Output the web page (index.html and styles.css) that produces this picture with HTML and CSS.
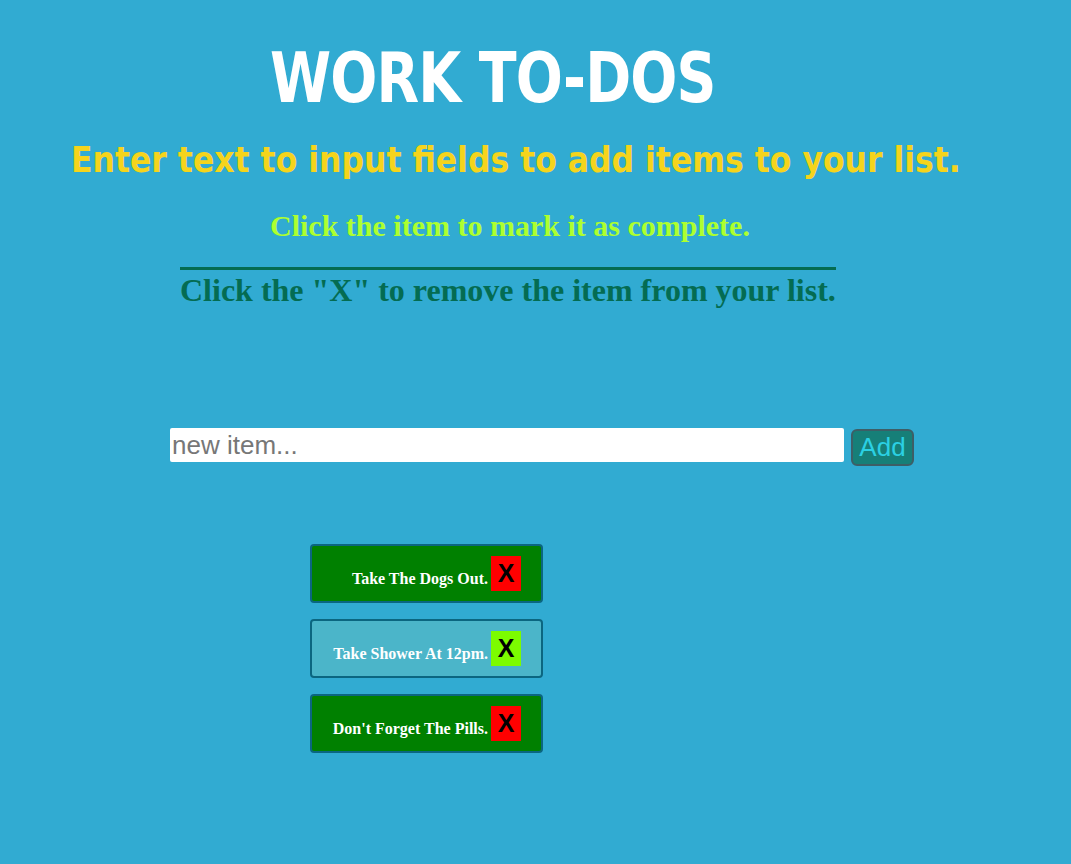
FILE: index.html
```html
<!DOCTYPE html>
<html>
<head>
<meta charset="utf-8">
<title>Work To-Dos</title>
<link rel="stylesheet" href="styles.css">
</head>
<body>
<div class="page">
  <h1 class="title">WORK TO-DOS</h1>
  <h2 class="intro">Enter text to input fields to add items to your list.</h2>
  <h3 class="hint-complete">Click the item to mark it as complete.</h3>
  <h3 class="hint-remove">Click the "X" to remove the item from your list.</h3>
  <div class="entry">
    <input class="entry-input" type="text" placeholder="new item...">
    <button class="entry-add">Add</button>
  </div>
  <ul class="todo-list">
    <li class="todo"><span class="todo-text">Take The Dogs Out.</span><span class="todo-x">X</span></li>
    <li class="todo done"><span class="todo-text">Take Shower At 12pm.</span><span class="todo-x">X</span></li>
    <li class="todo"><span class="todo-text">Don't Forget The Pills.</span><span class="todo-x">X</span></li>
  </ul>
</div>
</body>
</html>
```
FILE: styles.css
```css
html, body {
  margin: 0;
  padding: 0;
  background: #31abd2;
}
.page {
  display: flex;
  flex-direction: column;
  align-items: flex-start;
  min-height: 864px;
}
.title {
  margin: 36px 0 0 270px;
  font-family: "DejaVu Sans Condensed", "DejaVu Sans", sans-serif;
  font-weight: bold;
  font-size: 70px;
  line-height: 84px;
  color: #ffffff;
  transform: scaleX(0.88);
  transform-origin: left center;
  letter-spacing: -1px;
}
.intro {
  margin: 20px 0 0 71px;
  font-family: "DejaVu Sans Condensed", "DejaVu Sans", sans-serif;
  font-weight: bold;
  font-size: 35px;
  line-height: 40px;
  color: #f5d41c;
}
.hint-complete {
  margin: 29px 0 0 270px;
  font-family: "Liberation Serif", serif;
  font-weight: bold;
  font-size: 30px;
  line-height: 34px;
  color: #adff2f;
}
.hint-remove {
  margin: 24px 0 0 180px;
  padding-top: 3px;
  border-top: 3px solid #046c52;
  font-family: "Liberation Serif", serif;
  font-weight: bold;
  font-size: 32px;
  line-height: 34px;
  color: #046c52;
}
.entry {
  display: flex;
  align-items: flex-start;
  gap: 7px;
  margin: 121px 0 0 170px;
}
.entry-input {
  box-sizing: border-box;
  width: 674px;
  height: 34px;
  border: none;
  border-radius: 2px;
  padding: 0 2px;
  font-family: "Liberation Sans", sans-serif;
  font-size: 26px;
  color: #333;
  background: #fff;
  outline: none;
}
.entry-input::placeholder {
  color: #777;
}
.entry-add {
  box-sizing: border-box;
  width: 63px;
  height: 37px;
  margin-top: 1px;
  border: 2px solid #3d5e66;
  border-radius: 6px;
  background: #167f78;
  color: #2bd0e3;
  font-family: "Liberation Sans", sans-serif;
  font-size: 26px;
  padding: 0;
}
.todo-list {
  list-style: none;
  margin: 78px 0 0 310px;
  padding: 0;
  display: flex;
  flex-direction: column;
  gap: 16px;
}
.todo {
  box-sizing: border-box;
  width: 233px;
  height: 59px;
  display: flex;
  align-items: center;
  justify-content: flex-end;
  gap: 3px;
  padding-right: 20px;
  background: #008000;
  border: 2px solid #0b6680;
  border-radius: 4px;
}
.todo.done {
  background: #4bb5c9;
}
.todo-text {
  font-family: "Liberation Serif", serif;
  font-weight: bold;
  font-size: 16px;
  color: #ffffff;
  margin-top: 10px;
}
.todo-x {
  width: 30px;
  height: 35px;
  display: flex;
  align-items: center;
  justify-content: center;
  background: #ff0000;
  color: #000;
  font-family: "Liberation Sans", sans-serif;
  font-weight: bold;
  font-size: 25px;
}
.todo.done .todo-x {
  background: #7cfc00;
}
```
